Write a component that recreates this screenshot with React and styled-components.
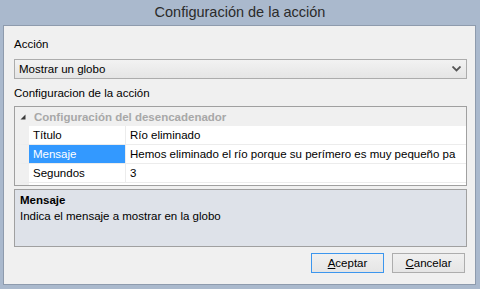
import React from 'react';
import styled, { createGlobalStyle } from 'styled-components';

const GlobalStyle = createGlobalStyle`
  html, body {
    margin: 0;
    padding: 0;
    background: #aab9cd;
  }
  * {
    box-sizing: border-box;
  }
`;

const Window = styled.div`
  width: 480px;
  height: 289px;
  display: flex;
  flex-direction: column;
  background: #aab9cd;
  font-family: "Liberation Sans", Arial, sans-serif;
  font-size: 11.5px;
  color: #000;
`;

const TitleBar = styled.div`
  height: 25px;
  display: flex;
  align-items: center;
  justify-content: center;
  font-size: 14.5px;
  color: #2b2b2b;
  padding-bottom: 1px;
`;

const Client = styled.div`
  flex: 1;
  margin: 0 4px 4px 3px;
  border: 1px solid #8e9bad;
  background: #f0f0f0;
  padding: 10px 8px 0 10px;
  display: flex;
  flex-direction: column;
`;

const Label = styled.div`
  height: 16px;
  line-height: 16px;
  margin-top: ${p => p.$top || 0}px;
`;

const Combo = styled.div`
  margin-top: 7px;
  height: 20px;
  border: 1px solid #acacac;
  background: linear-gradient(#f2f2f2, #e5e5e5);
  display: flex;
  align-items: center;
  justify-content: space-between;
  padding: 0 5px 0 4px;
`;

const Grid = styled.div`
  margin-top: 5px;
  height: 80px;
  border: 1px solid #a0a0a0;
  background: #fff;
  display: flex;
  flex-direction: column;
  overflow: hidden;
`;

const Category = styled.div`
  height: 19px;
  background: #f0f0f0;
  display: flex;
  align-items: center;
  gap: 8px;
  padding-left: 5px;
  font-weight: bold;
  color: #a8a8a8;
`;

const Row = styled.div`
  height: 19px;
  display: flex;
  border-left: 14px solid #f0f0f0;
  border-bottom: 1px solid #ececec;
`;

const Name = styled.div`
  width: 97px;
  flex-shrink: 0;
  padding-left: 4px;
  line-height: 18px;
  border-right: 1px solid #ececec;
  background: ${p => (p.$selected ? '#3399ff' : '#fff')};
  color: ${p => (p.$selected ? '#fff' : '#000')};
`;

const Value = styled.div`
  flex: 1;
  padding-left: 4px;
  line-height: 18px;
  white-space: nowrap;
  overflow: hidden;
`;

const GridFill = styled.div`
  flex: 1;
  border-left: 14px solid #f0f0f0;
  background: #fff;
`;

const Description = styled.div`
  margin-top: 3px;
  height: 58px;
  border: 1px solid #a0a0a0;
  background: #dee2e9;
  padding: 2px 5px;
`;

const DescTitle = styled.div`
  font-weight: bold;
  line-height: 16px;
`;

const DescText = styled.div`
  line-height: 16px;
`;

const Buttons = styled.div`
  margin-top: 6px;
  display: flex;
  justify-content: flex-end;
  gap: 8px;
  padding-right: 2px;
`;

const Button = styled.div`
  width: 73px;
  height: 20px;
  display: flex;
  align-items: center;
  justify-content: center;
  border: 1px solid ${p => (p.$default ? '#3c96ee' : '#adadad')};
  background: linear-gradient(#f0f0f0, #e5e5e5);
  u {
    text-decoration: underline;
  }
`;

const Chevron = () => (
  <svg width="9" height="6" viewBox="0 0 9 6">
    <path d="M0.5 0.5 L4.5 4.5 L8.5 0.5" fill="none" stroke="#555" strokeWidth="1.8" />
  </svg>
);

const Expanded = () => (
  <svg width="6" height="6" viewBox="0 0 6 6">
    <polygon points="5.5,0.5 5.5,5.5 0.5,5.5" fill="#3c3c3c" />
  </svg>
);

const rows = [
  { name: 'Título', value: 'Río eliminado' },
  { name: 'Mensaje', value: 'Hemos eliminado el río porque su perímero es muy pequeño pa', selected: true },
  { name: 'Segundos', value: '3' },
];

const App = () => (
  <>
    <GlobalStyle />
    <Window>
      <TitleBar>Configuración de la acción</TitleBar>
      <Client>
        <Label>Acción</Label>
        <Combo>
          <span>Mostrar un globo</span>
          <Chevron />
        </Combo>
        <Label $top={6}>Configuracion de la acción</Label>
        <Grid>
          <Category>
            <Expanded />
            Configuración del desencadenador
          </Category>
          {rows.map(r => (
            <Row key={r.name}>
              <Name $selected={r.selected}>{r.name}</Name>
              <Value>{r.value}</Value>
            </Row>
          ))}
          <GridFill />
        </Grid>
        <Description>
          <DescTitle>Mensaje</DescTitle>
          <DescText>Indica el mensaje a mostrar en la globo</DescText>
        </Description>
        <Buttons>
          <Button $default><span><u>A</u>ceptar</span></Button>
          <Button><span><u>C</u>ancelar</span></Button>
        </Buttons>
      </Client>
    </Window>
  </>
);

export default App;
